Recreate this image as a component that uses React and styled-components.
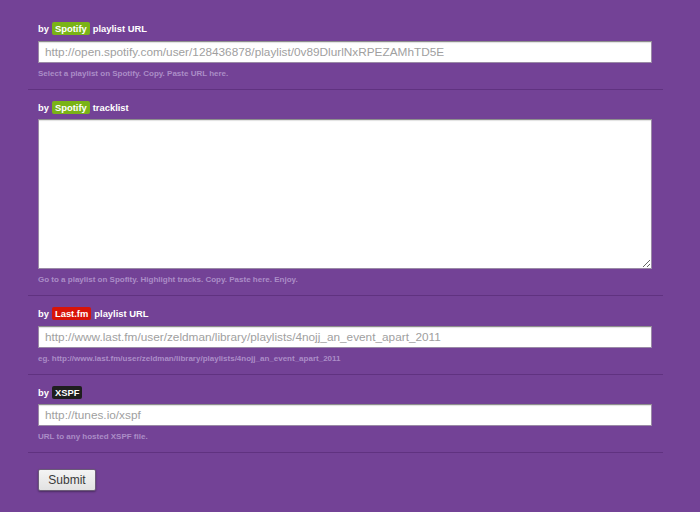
import React from "react";
import styled, { createGlobalStyle } from "styled-components";

const Global = createGlobalStyle`
  html, body { margin: 0; padding: 0; background: #734296; }
  body { font-family: "Liberation Sans", Arial, Helvetica, sans-serif; }
`;

const Page = styled.form`
  width: 700px;
  min-height: 512px;
  box-sizing: border-box;
  padding: 11px 0 0 28px;
  display: flex;
  flex-direction: column;
`;

const Section = styled.div`
  width: 635px;
  box-sizing: border-box;
  padding: 9px 0 9px 10px;
  border-bottom: 1px solid rgba(60, 20, 90, 0.35);
  display: flex;
  flex-direction: column;
`;

const Label = styled.div`
  display: flex;
  align-items: center;
  gap: 3px;
  height: 16px;
  font-size: 9.4px;
  font-weight: bold;
  color: #fff;
  margin-bottom: ${(p) => (p.$tight ? 4 : 5)}px;
`;

const Badge = styled.span`
  display: inline-flex;
  align-items: center;
  height: 13px;
  padding: 0 3px;
  border-radius: 2px;
  font-size: 9.4px;
  font-weight: bold;
  color: #fff;
  background: ${(p) => p.$bg};
`;

const Input = styled.input`
  width: 614px;
  height: 22px;
  box-sizing: border-box;
  border: 1px solid #9a8aa6;
  border-top-color: #8d8d8d;
  box-shadow: inset 0 1px 1px rgba(0, 0, 0, 0.12);
  padding: 0 6px;
  font-family: "Liberation Sans", Arial, sans-serif;
  font-size: 11.8px;
  background: #fff;
  outline: none;
  &::placeholder { color: #a0a0a0; }
`;

const Area = styled.textarea`
  width: 614px;
  height: 150px;
  box-sizing: border-box;
  border: 1px solid #9a8aa6;
  border-top-color: #8d8d8d;
  box-shadow: inset 0 1px 1px rgba(0, 0, 0, 0.12);
  background: #fff;
  outline: none;
  display: block;
`;

const Help = styled.div`
  margin-top: 5px;
  height: 12px;
  line-height: 12px;
  font-size: 8px;
  font-weight: bold;
  color: #ab8dc7;
`;

const Actions = styled.div`
  padding: 16px 0 0 10px;
`;

const Button = styled.button`
  width: 58px;
  height: 22px;
  border: 1px solid #6c5c78;
  border-radius: 2px;
  background: linear-gradient(#f4f4f4, #e2e2e2);
  box-shadow: 0 1px 2px rgba(0, 0, 0, 0.35);
  font-family: "Liberation Sans", Arial, sans-serif;
  font-size: 12px;
  color: #3a3a3a;
  padding: 0;
`;

export default function App() {
  return (
    <>
      <Global />
      <Page onSubmit={(e) => e.preventDefault()}>
        <Section>
          <Label>by <Badge $bg="#7ab317">Spotify</Badge> playlist URL</Label>
          <Input placeholder="http://open.spotify.com/user/128436878/playlist/0v89DlurlNxRPEZAMhTD5E" />
          <Help>Select a playlist on Spotify. Copy. Paste URL here.</Help>
        </Section>
        <Section>
          <Label $tight>by <Badge $bg="#7ab317">Spotify</Badge> tracklist</Label>
          <Area />
          <Help>Go to a playlist on Spofity. Highlight tracks. Copy. Paste here. Enjoy.</Help>
        </Section>
        <Section>
          <Label>by <Badge $bg="#d81408">Last.fm</Badge> playlist URL</Label>
          <Input placeholder="http://www.last.fm/user/zeldman/library/playlists/4nojj_an_event_apart_2011" />
          <Help>eg. http://www.last.fm/user/zeldman/library/playlists/4nojj_an_event_apart_2011</Help>
        </Section>
        <Section>
          <Label $tight>by <Badge $bg="#1e1e1e">XSPF</Badge></Label>
          <Input placeholder="http://tunes.io/xspf" />
          <Help>URL to any hosted XSPF file.</Help>
        </Section>
        <Actions>
          <Button type="submit">Submit</Button>
        </Actions>
      </Page>
    </>
  );
}
